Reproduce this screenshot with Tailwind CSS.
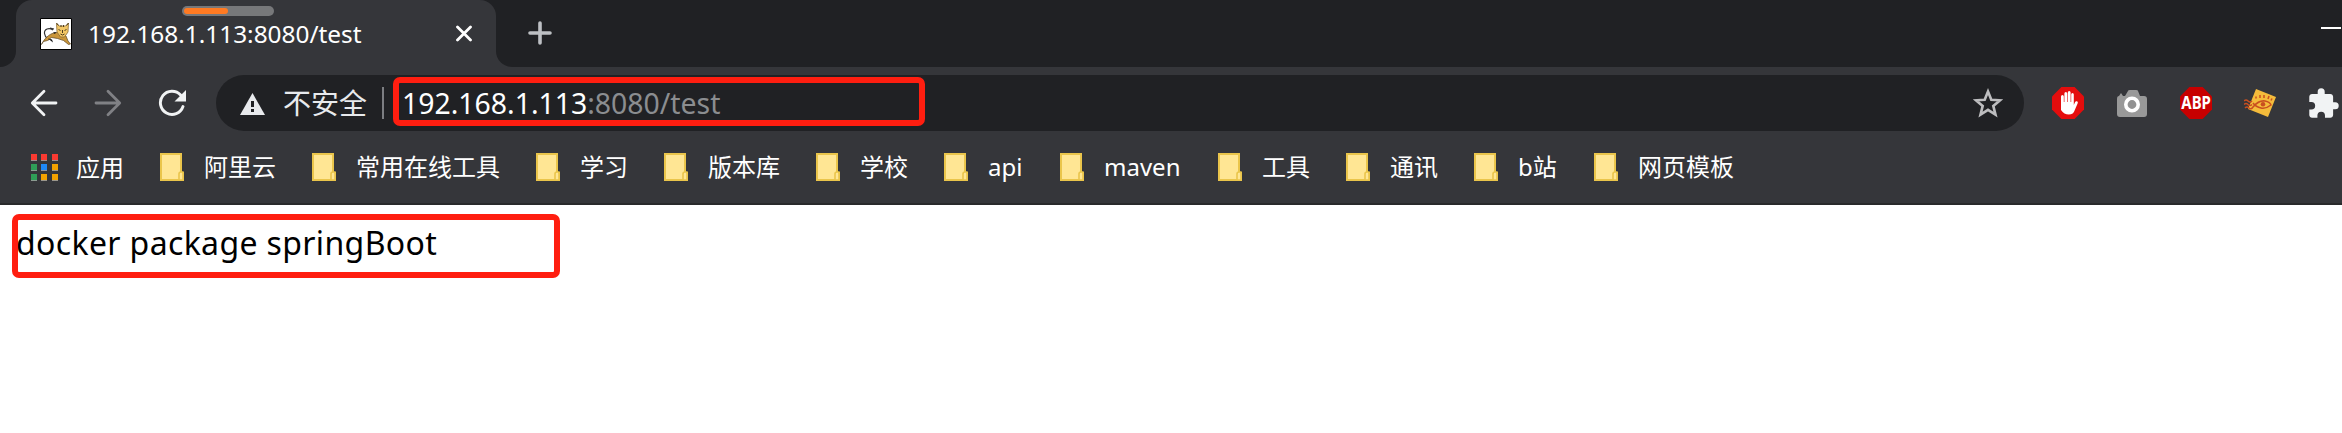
<!DOCTYPE html>
<html lang="zh-CN">
<head>
<meta charset="utf-8">
<title>192.168.1.113:8080/test</title>
<script src="https://cdn.jsdelivr.net/npm/@tailwindcss/browser@4"></script>
</head>
<body class="h-[433px] w-[2342px] overflow-hidden bg-white font-['Noto_Sans','Noto_Sans_CJK_SC',sans-serif]">
<svg class="hidden">
  <symbol id="folder" viewBox="0 0 24 28"><path d="M1 1h20v18.500h2v7.500H1z" fill="#ffe694" stroke="#eac54b" stroke-width="2"/><path d="M19 27v-6q0-2 2-2h1q1 0 1 2v6z" fill="#ffe694" stroke="#eac54b" stroke-width="1.600"/></symbol>
</svg>

<!-- Tab strip -->
<header class="flex h-[67px] bg-[#202124]">
  <div class="flex w-4 items-end bg-[#35363a]"><div class="h-full w-4 rounded-br-2xl bg-[#202124]"></div></div>
  <div class="relative h-full w-[480px] bg-[#202124]">
    <div class="flex h-full items-center rounded-t-2xl bg-[#35363a] pl-6 pr-6">
      <svg class="h-8 w-8 shrink-0" viewBox="0 0 32 32">
        <path fill="#fff" stroke="#000" d="M.5.500h31v31H.5z"/>
        <path d="M13 12C9 9 4 11 4.500 15.500S8 21 9 22M10 10l4 1" fill="none" stroke="#333" stroke-width="1.200"/>
        <path d="M1.500 26.500C4 21 9 16 14 15l5-1 7 4 2 5 2.500 3-2 .5-5-4-6-2-6-1-4 3-4 1-1.500 2z" fill="#c9953a" stroke="#5c4624" stroke-width=".7"/>
        <path d="M8 20.500l5 4-1-3zM13 14.500l3-.5-1 2z" fill="#111"/>
        <path d="M16.500 5.500l3 2.500h6l3-3-.5 9-3.500 5h-4l-3.500-5z" fill="#f3c766" stroke="#8c6c35" stroke-width=".8"/>
        <path d="M16.500 5l2 2.500M28.500 5l-2 2.500M21 7v2M23.500 7v2M18.500 11.500l2 1M26.500 11.500l-2 1M20.500 16l2 1 2-1M22.500 12v3" stroke="#4c3d20" fill="none"/>
      </svg>
      <div class="ml-4 flex-1 whitespace-nowrap text-[24.400px] leading-8 text-white">192.168.1.113:8080/test</div>
      <svg class="h-[17px] w-4" viewBox="0 0 16 16"><path d="M1.500 1.500l13 13m0-13l-13 13" stroke="#fff" stroke-width="2.800" stroke-linecap="round"/></svg>
    </div>
    <div class="absolute left-[166px] top-[6px] h-[10px] w-[92px] rounded-full bg-[#77787a] p-[2px]"><div class="h-[6px] w-11 rounded-full bg-[#ff7a22]"></div></div>
  </div>
  <div class="w-4 bg-[#35363a]"><div class="h-full w-4 rounded-bl-2xl bg-[#202124]"></div></div>
  <svg class="ml-4 mt-[21px] h-6 w-6" viewBox="0 0 24 24"><path d="M12 2v20M2 12h20" stroke="#bdc0c4" stroke-width="3.600" stroke-linecap="round"/></svg>
  <div class="ml-auto mr-px mt-[27px] h-[2px] w-5 bg-white"></div>
</header>

<!-- Toolbar -->
<nav class="flex h-[72px] items-center bg-[#35363a]">
  <svg class="ml-[30px] h-7 w-7" viewBox="0 0 28 28"><path d="M26 14H2.500M14 2.300L2.300 14 14 25.700" fill="none" stroke="#f1f3f4" stroke-width="2.800" stroke-linecap="round" stroke-linejoin="round"/></svg>
  <svg class="ml-9 h-7 w-7" viewBox="0 0 28 28"><path d="M2 14h23.500M14 2.300L25.700 14 14 25.700" fill="none" stroke="#808185" stroke-width="2.800" stroke-linecap="round" stroke-linejoin="round"/></svg>
  <svg class="ml-9 h-7 w-7" viewBox="0 0 28 28"><path d="M25 17.500A11.600 11.600 0 1 1 22.600 6" fill="none" stroke="#f1f3f4" stroke-width="2.900" stroke-linecap="round"/><path d="M28 1v11.500H16.500z" fill="#f1f3f4"/></svg>
  <div class="relative ml-[30px] flex h-14 w-[1808px] items-center rounded-full bg-[#202124]">
    <svg class="ml-6 mt-px h-[22px] w-[25px]" viewBox="0 0 25 22"><path d="M12.500 0L25 22H0z" fill="#e8eaed"/><path d="M11 8h3v6h-3zM11 16h3v3h-3z" fill="#202124"/></svg>
    <div class="ml-[18px] w-[85px] whitespace-nowrap text-[28px] leading-[40px] text-[#e8eaed]">不安全</div>
    <div class="ml-[14px] h-8 w-[2px] bg-[#7c7e82]"></div>
    <div class="ml-[18px] whitespace-nowrap text-[28.400px] leading-[40px] text-[#8b8d90]"><span class="text-white">192.168.1.113</span>:8080/test</div>
    <svg class="ml-auto mr-[21px] h-[30px] w-[30px]" viewBox="0 0 30 30"><path d="M15 3.500l3.300 8.200 8.800.6-6.800 5.600 2.200 8.700-7.500-4.800-7.500 4.800 2.200-8.700-6.800-5.600 8.800-.6z" fill="none" stroke="#bdbdbf" stroke-width="2.600"/></svg>
    <div class="absolute left-[177px] top-[2px] h-[49px] w-[532px] rounded-[7px] border-[6px] border-[#ff1e10]"></div>
  </div>
  <svg class="ml-7 h-8 w-8" viewBox="0 0 32 32"><path d="M9.400 0h13.200L32 9.400v13.200L22.600 32H9.400L0 22.600V9.400z" fill="#e40d0d"/><path d="M9 20V9.500q0-1.500 1.400-1.500t1.400 1.500V15h.6V6.500q0-1.500 1.400-1.500t1.400 1.500V15h.6V5.500Q15.800 4 17.200 4t1.400 1.500V15h.6V7.500q0-1.500 1.300-1.500t1.300 1.500V18l1.200-2.800q.7-1.500 2-.9t.7 2L22.800 23q-1.300 4.500-6 4.500T9 23z" fill="#fff"/></svg>
  <svg class="ml-8 h-8 w-8" viewBox="0 0 32 32"><path d="M3 9l2-3 2 3h2l3-5q0-1 2-1h6q2 0 2 1l2 5h4q3 0 3 3v15q0 3-3 3H4q-3 0-3-3V12q0-3 2-3z" fill="#999"/><circle cx="16" cy="17.500" r="6.200" fill="#929292" stroke="#fff" stroke-width="3.600"/></svg>
  <svg class="ml-8 h-8 w-8 overflow-visible" viewBox="0 0 32 32"><path d="M9.400 0h13.200L32 9.400v13.200L22.600 32H9.400L0 22.600V9.400z" fill="#c70000"/><text x="1.300" y="21.800" textLength="29.600" lengthAdjust="spacingAndGlyphs" font-family="Noto Sans" font-weight="700" font-size="17" fill="#fff">ABP</text></svg>
  <svg class="ml-8 h-8 w-8" viewBox="0 0 32 32"><path d="M12 2l20 8-8 20L4 22z" fill="#f4bb3b"/><g fill="none" stroke="#c94f20" stroke-width="1.500"><path d="M9 20q6-7 12-6 5 1 6 4-5 4-10 3-5-1-8-5M0 14q2-2 4 0t4 0M0 17.500q2-2 4 0t4 0M1 21q2-2 4 0t4-1M12 11.500v-2M16 11V8M20 11V8M24 12l1-3M27 13.500l1-2"/></g><circle cx="19" cy="17.300" r="2.300" fill="#c94f20"/></svg>
  <svg class="ml-[33px] h-[30px] w-[30px]" viewBox="1.800 .8 21.400 21.400"><path d="M20.500 11H19V7c0-1.100-.9-2-2-2h-4V3.500a2.500 2.500 0 0 0-5 0V5H4c-1.100 0-2 .9-2 2v3.800h1.500a2.700 2.700 0 0 1 0 5.400H2V20c0 1.100.9 2 2 2h3.800v-1.500a2.700 2.700 0 0 1 5.400 0V22H17c1.100 0 2-.9 2-2v-4h1.500a2.500 2.500 0 0 0 0-5z" fill="#f1f3f4"/></svg>
</nav>

<!-- Bookmarks bar -->
<nav class="flex h-[66px] items-start gap-9 whitespace-nowrap border-b-2 border-[#292a2b] bg-[#35363a] pl-[31px] pt-2 text-[24px] leading-[40px] text-white">
  <div class="flex w-[93px] items-center gap-[18px]">
    <div class="grid h-[27px] w-[27px] shrink-0 grid-cols-3 gap-x-1 gap-y-[3px]">
      <i class="w-[6px] border-b border-[#9b8c8c] bg-[#f93a31]"></i><i class="w-[6px] border-b border-[#9b8c8c] bg-[#f93a31]"></i><i class="w-[6px] border-b border-[#9b8c8c] bg-[#f93a31]"></i>
      <i class="w-[6px] border-b border-[#8c9b91] bg-[#2f9e57]"></i><i class="w-[6px] border-b border-[#8c919b] bg-[#1e88f7]"></i><i class="w-[6px] border-b border-[#9b978c] bg-[#f3a200]"></i>
      <i class="w-[6px] border-b border-[#8c9b91] bg-[#2f9e57]"></i><i class="w-[6px] border-b border-[#9b978c] bg-[#f3a200]"></i><i class="w-[6px] border-b border-[#9b978c] bg-[#f3a200]"></i>
    </div><span class="pt-px">应用</span>
  </div>
  <div class="flex w-[116px] items-center gap-5"><svg class="h-7 w-6 shrink-0"><use href="#folder"/></svg>阿里云</div>
  <div class="flex w-[188px] items-center gap-5"><svg class="h-7 w-6 shrink-0"><use href="#folder"/></svg>常用在线工具</div>
  <div class="flex w-[92px] items-center gap-5"><svg class="h-7 w-6 shrink-0"><use href="#folder"/></svg>学习</div>
  <div class="flex w-[116px] items-center gap-5"><svg class="h-7 w-6 shrink-0"><use href="#folder"/></svg>版本库</div>
  <div class="flex w-[92px] items-center gap-5"><svg class="h-7 w-6 shrink-0"><use href="#folder"/></svg>学校</div>
  <div class="flex w-[80px] items-center gap-5"><svg class="h-7 w-6 shrink-0"><use href="#folder"/></svg>api</div>
  <div class="flex w-[122px] items-center gap-5"><svg class="h-7 w-6 shrink-0"><use href="#folder"/></svg>maven</div>
  <div class="flex w-[92px] items-center gap-5"><svg class="h-7 w-6 shrink-0"><use href="#folder"/></svg>工具</div>
  <div class="flex w-[92px] items-center gap-5"><svg class="h-7 w-6 shrink-0"><use href="#folder"/></svg>通讯</div>
  <div class="flex w-[84px] items-center gap-5"><svg class="h-7 w-6 shrink-0"><use href="#folder"/></svg>b站</div>
  <div class="flex w-[140px] items-center gap-5"><svg class="h-7 w-6 shrink-0"><use href="#folder"/></svg>网页模板</div>
</nav>

<!-- Page content -->
<main class="relative h-[228px] pl-4 pt-[14px]">
  <p class="text-[32px] leading-[48px] tracking-[.36px] whitespace-nowrap text-black">docker package springBoot</p>
  <div class="absolute left-3 top-[9px] h-16 w-[548px] rounded-[7px] border-[6px] border-[#ff1e10]"></div>
</main>
</body>
</html>
